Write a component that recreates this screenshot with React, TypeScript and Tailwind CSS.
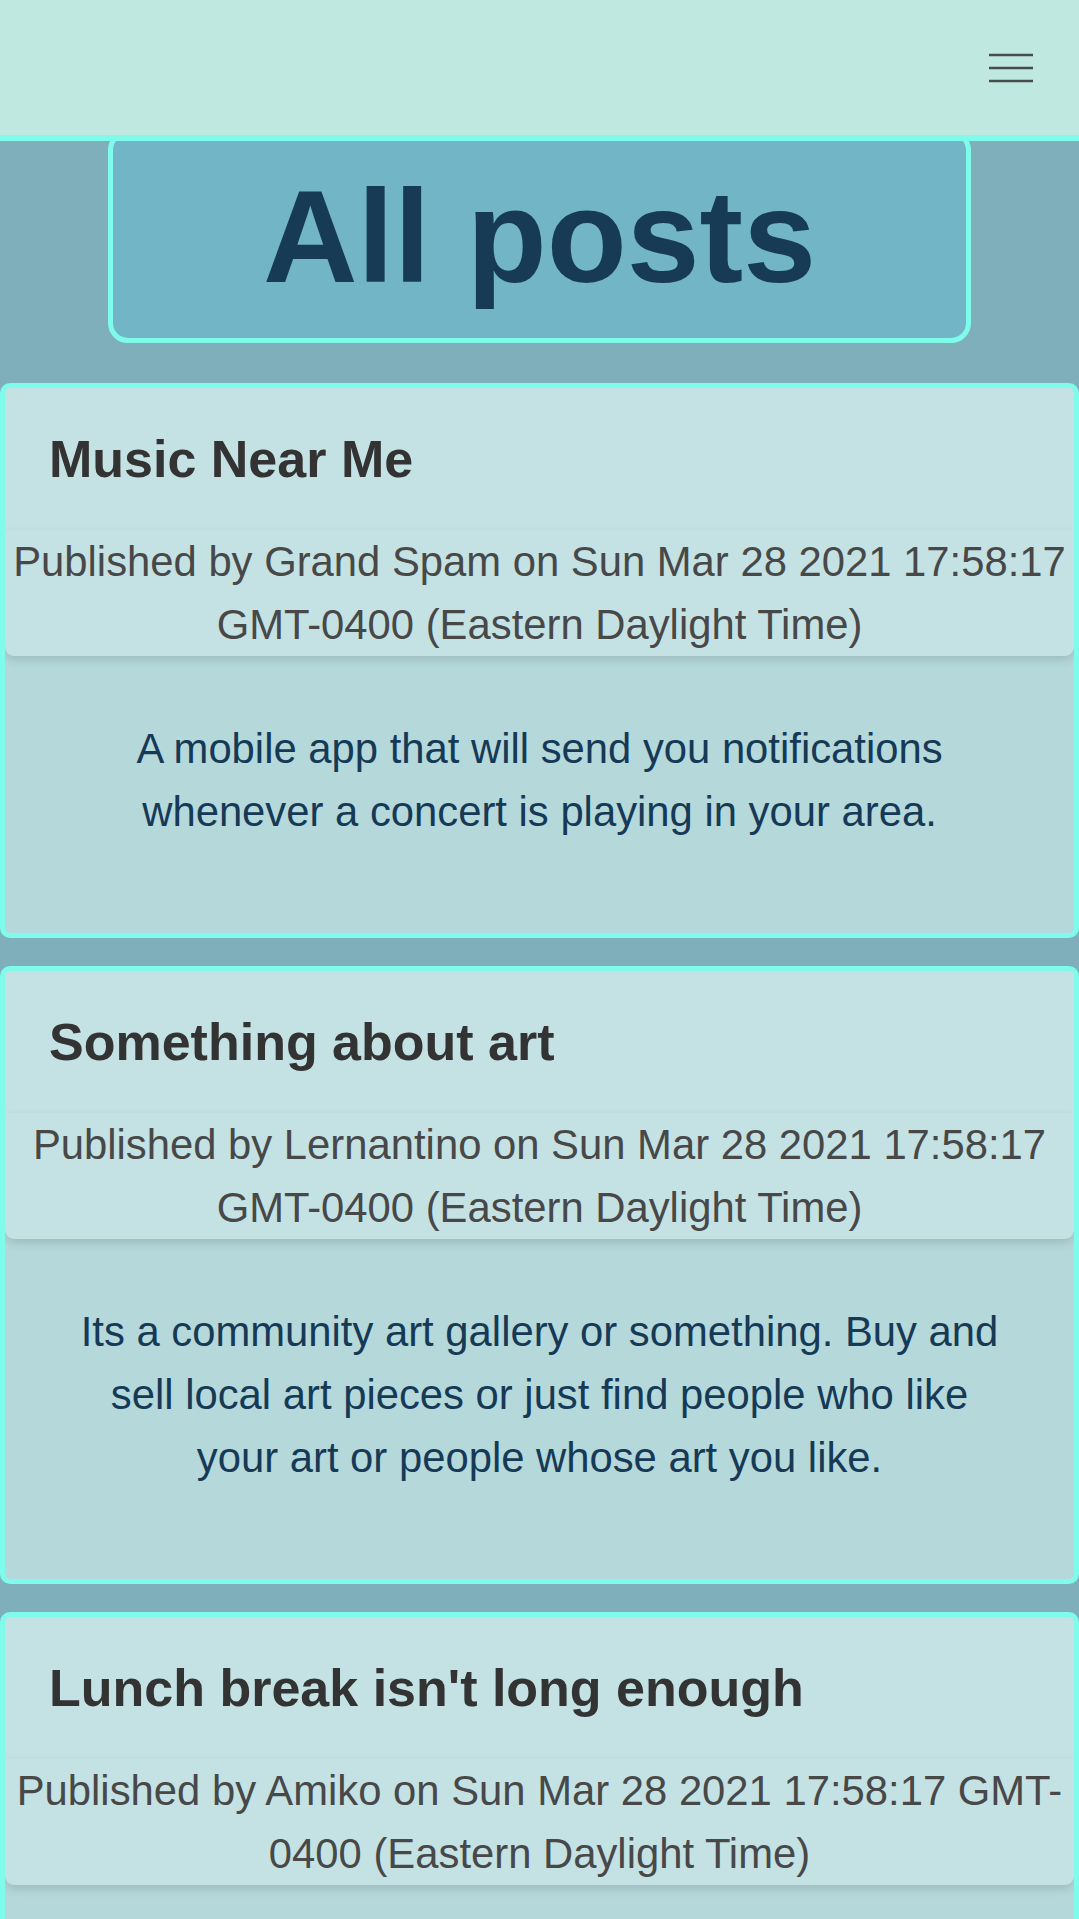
import React from "react"

type Post = {
  title: string
  author: string
  date: string
  body: string
}

const posts: Post[] = [
  {
    title: "Music Near Me",
    author: "Grand Spam",
    date: "Sun Mar 28 2021 17:58:17 GMT-0400 (Eastern Daylight Time)",
    body: "A mobile app that will send you notifications whenever a concert is playing in your area.",
  },
  {
    title: "Something about art",
    author: "Lernantino",
    date: "Sun Mar 28 2021 17:58:17 GMT-0400 (Eastern Daylight Time)",
    body: "Its a community art gallery or something. Buy and sell local art pieces or just find people who like your art or people whose art you like.",
  },
  {
    title: "Lunch break isn't long enough",
    author: "Amiko",
    date: "Sun Mar 28 2021 17:58:17 GMT-0400 (Eastern Daylight Time)",
    body: "An app that tells you how long you have left on your lunch break so you never come back late.",
  },
]

function PostCard({ post }: { post: Post }) {
  const byline = `Published by ${post.author} on ${post.date}`
  return (
    <article className="border-[5px] border-[#7ffbec] rounded-[10px] bg-[#b5d8db] overflow-hidden">
      <div className="h-[142px] flex items-center pl-[44px] bg-[#c4e2e4]">
        <h2 className="text-[52px] font-bold text-[#333333] leading-[1.2]">{post.title}</h2>
      </div>
      <div className="relative bg-[#c4e2e4] rounded-b-[9px] shadow-[0_4px_10px_rgba(0,0,0,0.13)] text-center text-[41.8px] leading-[63px] text-[#484848]">
        {byline}
      </div>
      <p className="px-[68px] pt-[61px] pb-[90px] text-center text-[41.8px] leading-[63px] text-[#163a56]">
        {post.body}
      </p>
    </article>
  )
}

export default function App() {
  return (
    <div className="min-h-screen bg-[#7eafba] font-['Liberation_Sans',Arial,sans-serif]">
      {/* Nav */}
      <header className="relative z-10 h-[141px] bg-[#bfe9e0] border-b-[6px] border-[#7ffbec] flex items-center justify-end pr-[46px]">
        <button aria-label="menu" className="w-[44px] h-[30px] flex items-center">
          <svg width="44" height="30" viewBox="0 0 44 30">
            <path d="M0 2h44M0 15h44M0 28h44" stroke="#474b4b" strokeWidth="2.5" />
          </svg>
        </button>
      </header>

      <main className="pb-10">
        <div className="mx-auto w-[80%] -mt-[11px] h-[213px] flex items-center justify-center bg-[#72b5c6] border-[5px] border-[#7ffbec] rounded-[20px]">
          <h1 className="text-[131px] font-bold text-[#173a55] leading-none">All posts</h1>
        </div>

        <section className="mt-[40px] flex flex-col gap-[28px]">
          {posts.map((p) => (
            <PostCard key={p.title} post={p} />
          ))}
        </section>
      </main>
    </div>
  )
}
